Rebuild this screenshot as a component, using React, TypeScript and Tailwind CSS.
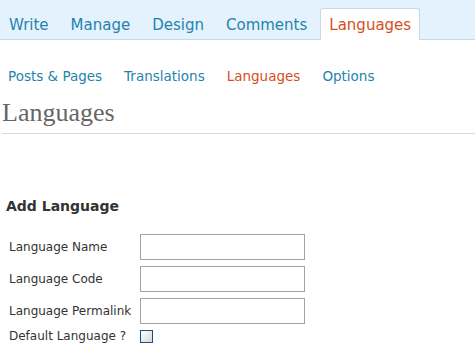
import React from 'react'

const tabs = ['Write', 'Manage', 'Design', 'Comments', 'Languages']
const subs = ['Posts & Pages', 'Translations', 'Languages', 'Options']
const fields = ['Language Name', 'Language Code', 'Language Permalink']

export default function App() {
  return (
    <div className="w-[475px] h-[352px] overflow-hidden bg-white font-['DejaVu_Sans',sans-serif]">
      {/* Top tabs */}
      <div className="h-10 bg-[#e4f2fd] border-b border-[#c6d9e9] flex items-end gap-1">
        {tabs.map((t) => {
          const active = t === 'Languages'
          return (
            <a
              key={t}
              className={
                active
                  ? '-mb-px px-2 pt-[8px] pb-[6px] text-[15px] leading-[17px] bg-white text-[#d54e21] border border-b-0 border-[#c6d9e9] rounded-t-[3px]'
                  : '-mb-px px-2 pt-[8px] pb-[6px] text-[15px] leading-[17px] text-[#2583ad] border border-b-0 border-transparent'
              }
            >
              {t}
            </a>
          )
        })}
      </div>

      {/* Sub menu */}
      <div className="flex gap-[22px] pl-[8px] pt-[28px] text-[13.5px] leading-[16px]">
        {subs.map((s, i) => (
          <a key={s} className={i === 2 ? 'text-[#d54e21]' : 'text-[#2583ad]'}>
            {s}
          </a>
        ))}
      </div>

      {/* Page heading */}
      <div className="ml-[2px] mt-[14px] pb-[6px] border-b border-[#dadada]">
        <h2 className="font-['Liberation_Serif',serif] text-[26px] leading-[29px] text-[#666]">Languages</h2>
      </div>

      {/* Add language form */}
      <h3 className="mt-[64px] ml-[6px] text-[14px] leading-[17px] font-bold text-[#333]">Add Language</h3>
      <div className="mt-[19px] ml-[9px] grid grid-cols-[131px_165px] gap-y-[6px] items-center text-[12px] text-[#333]">
        {fields.map((f) => (
          <React.Fragment key={f}>
            <span className="whitespace-nowrap">{f}</span>
            <span className="block h-[26px] border border-[#a3a3a3] bg-white" />
          </React.Fragment>
        ))}
        <span className="whitespace-nowrap leading-[13px]">Default Language ?</span>
        <span className="block w-[13px] h-[13px] border border-[#1c4e7d] bg-gradient-to-br from-[#fff] to-[#d8d8d8]" />
      </div>
    </div>
  )
}
